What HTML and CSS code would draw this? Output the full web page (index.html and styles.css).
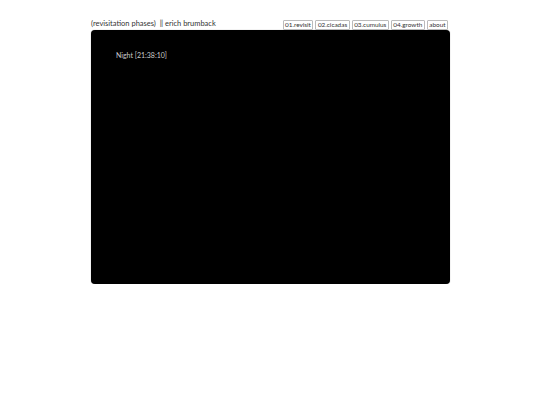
FILE: index.html
```html
<!DOCTYPE html>
<html>
<head>
<meta charset="utf-8">
<link rel="stylesheet" href="styles.css">
</head>
<body>
<div class="wrap">
  <div class="header">
    <div class="title">(revisitation phases) &nbsp;‖ erich brumback</div>
    <div class="nav">
      <span class="btn">01.revisit</span>
      <span class="btn">02.cicadas</span>
      <span class="btn">03.cumulus</span>
      <span class="btn">04.growth</span>
      <span class="btn">about</span>
    </div>
  </div>
  <div class="stage">
    <div class="clock">Night [21:38:10]</div>
  </div>
</div>
</body>
</html>
```
FILE: styles.css
```css
html, body {
  margin: 0;
  padding: 0;
  background: #fff;
}
body {
  font-family: Lato, "DejaVu Sans", sans-serif;
  color: #222;
}
.wrap {
  width: 359px;
  margin: 0 0 0 91px;
  padding-top: 19px;
}
.header {
  display: flex;
  justify-content: space-between;
  align-items: flex-end;
  height: 11px;
}
.title {
  font-size: 7.5px;
  line-height: 9px;
  margin-bottom: 2px;
  color: #333;
}
.nav {
  display: flex;
  gap: 2px;
  padding-right: 2px;
}
.btn {
  font-size: 6.4px;
  line-height: 8px;
  padding: 0 1.5px;
  border: 1px solid #bbb;
  border-radius: 1px;
  color: #333;
}
.stage {
  height: 254px;
  background: #000;
  border-radius: 4px;
  box-shadow: 0 0 1px #888;
  padding: 21px 0 0 25px;
  box-sizing: border-box;
}
.clock {
  color: #ccc;
  font-size: 7px;
  line-height: 9px;
}
```
